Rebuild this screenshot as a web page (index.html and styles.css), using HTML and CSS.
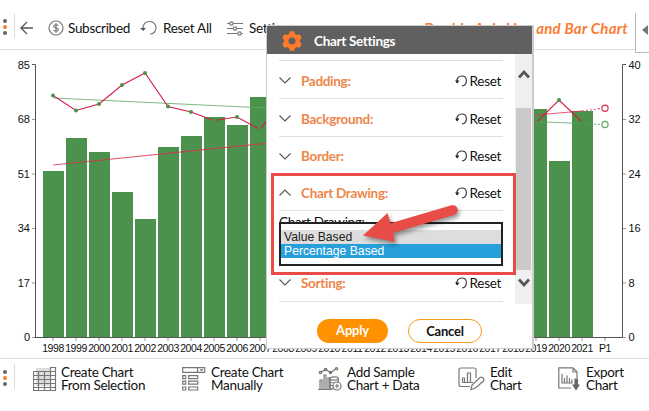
FILE: index.html
```html
<!DOCTYPE html>
<html lang="en">
<head>
<meta charset="utf-8">
<title>Chart Settings</title>
<link rel="stylesheet" href="styles.css">
</head>
<body>
<header class="toolbar">
  <div class="grip"><i></i><i class="hot"></i><i></i></div>
  <svg class="back" width="14" height="14" viewBox="0 0 14 14"><path d="M13 7H1M7 1L1 7l6 6"/></svg>
  <div class="tool subscribed"><svg width="16" height="16" viewBox="0 0 16 16"><circle cx="8" cy="8" r="7"/><path d="M10.3 5.7C9.8 4.5 6 4.2 5.8 6.2c-.1 2.2 4.6 1.1 4.5 3.5-.1 2-4 2-4.7.2M8 3v10"/></svg><span>Subscribed</span></div>
  <div class="tool reset-all"><svg width="17" height="16" viewBox="0 0 17 16"><path d="M3 9.5C2.500 4 5.500 1.500 9.500 1.500c4 0 6.500 3 6.500 6.300 0 3.700-2.700 6.200-6 6.200"/><path class="fill" d="M0 8h6L3.200 11z"/></svg><span>Reset All</span></div>
  <div class="tool settings"><svg width="17" height="15" viewBox="0 0 17 15"><path d="M0 2.500h3M6 2.500h10M0 7.500h6M10 7.500h6M0 12.500h10.500M14.500 12.500H16"/><circle cx="4.500" cy="2.500" r="1.700"/><circle cx="8" cy="7.500" r="1.700"/><circle cx="12.500" cy="12.500" r="1.700"/></svg><span>Settings</span></div>
  <h1>Double Axis Line <b>and Bar Chart</b></h1>
  <div class="side-tab"><svg width="8" height="10" viewBox="0 0 8 10"><path d="M0 5l6-5v10z"/></svg></div>
</header>

<main>
<svg class="chart" width="649" height="308" viewBox="0 50 649 308">
  <g class="bars">
    <path d="M43 171h21V337H43zM66 138h21V337H66zM89 152h21V337H89zM112 192h21V337h-21zM135 219h21V337h-21zM158 147h21V337h-21zM181 136h21V337h-21zM204 117h21V337h-21zM227 125h21V337h-21zM250 97h21V337h-21zM526 109h21V337h-21zM549 161h21V337h-21zM572 111h21V337h-21z"/>
  </g>
  <g class="axis">
    <path d="M32 64.500h3.500V337.500M35 337.500H622.500M626 64.500h-3.500V337.500"/>
    <path class="tick" d="M32 119.500h3M32 174h3M32 228.500h3M32 283h3M32 337.500h3M623 119.500h3M623 174h3M623 228.500h3M623 283h3M623 337.500h3M53 338v3M76 338v3M99 338v3M122 338v3M145 338v3M168 338v3M191 338v3M214 338v3M237 338v3M260 338v3M536 338v3M559 338v3M582 338v3M605 338v3"/>
  </g>
  <g class="labels end"><text x="30" y="69">85</text><text x="30" y="123">68</text><text x="30" y="178">51</text><text x="30" y="232">34</text><text x="30" y="287">17</text><text x="30" y="341">0</text></g>
  <g class="labels"><text x="628.500" y="69">40</text><text x="628.500" y="123">32</text><text x="628.500" y="178">24</text><text x="628.500" y="232">16</text><text x="628.500" y="287">8</text><text x="628.500" y="341">0</text></g>
  <g class="labels mid"><text x="53" y="351.500">1998</text><text x="76" y="351.500">1999</text><text x="99" y="351.500">2000</text><text x="122" y="351.500">2001</text><text x="145" y="351.500">2002</text><text x="168" y="351.500">2003</text><text x="191" y="351.500">2004</text><text x="214" y="351.500">2005</text><text x="237" y="351.500">2006</text><text x="260" y="351.500">2007</text><text x="283" y="351.500">2008</text><text x="306" y="351.500">2009</text><text x="329" y="351.500">2010</text><text x="352" y="351.500">2011</text><text x="375" y="351.500">2012</text><text x="398" y="351.500">2013</text><text x="421" y="351.500">2014</text><text x="444" y="351.500">2015</text><text x="467" y="351.500">2016</text><text x="490" y="351.500">2017</text><text x="513" y="351.500">2018</text><text x="536" y="351.500">2019</text><text x="559" y="351.500">2020</text><text x="582" y="351.500">2021</text><text x="605" y="351.500">P1</text></g>
  <g class="trend">
    <path class="green" d="M53 98L267 108M533 121.500L582 123.500"/>
    <path class="red" d="M53 165L270 143M530 115.500L582 111"/>
    <path class="green dash" d="M582 123.500L601 124.500"/>
    <path class="red dash" d="M582 111L601 108.500"/>
  </g>
  <path class="series" d="M53 95.500L76 110.500 99 104 122 85 145 73 168 106.500 191 112 214 120.500 237 117 260 129.500 270 116M530 126L536 123 559 100 582 122"/>
  <g class="points"><circle cx="53" cy="95.500" r="2"/><circle cx="76" cy="110.500" r="2"/><circle cx="99" cy="104" r="2"/><circle cx="122" cy="85" r="2"/><circle cx="145" cy="73" r="2"/><circle cx="168" cy="106.500" r="2"/><circle cx="191" cy="112" r="2"/><circle cx="214" cy="120" r="2"/><circle cx="237" cy="117" r="2"/><circle cx="260" cy="129.500" r="2"/><circle cx="536" cy="123" r="2"/><circle cx="559" cy="100" r="2"/><circle cx="582" cy="123" r="2"/></g>
  <circle class="ring red" cx="605" cy="108.300" r="3.100"/><circle class="ring green" cx="605" cy="124.500" r="3.100"/>
</svg>
</main>

<footer class="actions">
  <div class="grip"><i></i><i class="hot"></i><i></i></div>
  <div class="action selection"><svg width="24" height="24" viewBox="0 0 24 24"><path class="soft" d="M3 1h14v18H3z"/><path d="M1 4.500h22M1 8.500h22M1 12.500h22M1 16.500h22M1 20.500h22M.5 4v19.500h22V.5H17M5.500 4v19M11.500 4v19M17.500 1v22"/></svg><span>Create Chart<br>From Selection</span></div>
  <div class="action manual"><svg width="24" height="24" viewBox="0 0 24 24"><path d="M.7.700h22v4.600H.7zM15.500 1v4M.7 8.700h3v3h-3zM6.700 8.700h9v3h-9zM.7 14.200h3v3h-3zM6.700 14.200h9v3h-9zM.7 20h3v3h-3zM6.700 20h9v3h-9z"/><path class="fill" d="M17.500 2.200h4l-2 2z"/></svg><span>Create Chart<br>Manually</span></div>
  <div class="action sample"><svg width="24" height="24" viewBox="0 0 24 24"><path d="M0 22.500h14M2 22v-9h2v9M6 22V8h2v14M10 22V11h2v11M2.500 5.500l5-3 5 3 6-4"/><circle cx="2.500" cy="5.500" r="1.200"/><circle cx="7.500" cy="2.500" r="1.200"/><circle cx="12.500" cy="5.500" r="1.200"/><circle cx="18.500" cy="1.800" r="1.200"/><ellipse cx="16" cy="11.500" rx="4.300" ry="1.600"/><path d="M11.700 11.500v9c1 1.500 4 1.500 5 1.200M20.300 11.500v4M11.700 14.500c1 2 7 2 8.600 0M11.700 17.500c1 1.500 3 1.500 4 1.300"/><circle class="paper" cx="19" cy="19" r="4"/><path d="M16.800 19h4.400M19 16.800v4.400"/></svg><span>Add Sample<br>Chart + Data</span></div>
  <div class="action edit"><svg width="27" height="24" viewBox="0 0 27 24"><path d="M12 19.500H3q-2 0-2-2V3q0-2 2-2h13q2 0 2 2v8"/><path d="M4 15.500h11M4.500 15v-4h2v4M9.500 15V6h3v9"/><path class="paper" d="M13 22.500l1-4.500 8-7.500q1.500-1 3 .5t.5 3l-8 7z"/></svg><span>Edit<br>Chart</span></div>
  <div class="action export"><svg width="22" height="24" viewBox="0 0 22 24"><path d="M13 21H.8V.8H15l4 4V11M15 1v4h4"/><path d="M3.500 16h11M4 15.500V7M6.500 15.500V11M9 15.500V8.500M11.500 15.500V11M14 15.500v-3"/><path class="fill" d="M16.500 11.500h3.500v6h2L18 23.500l-4-6h2.500z"/></svg><span>Export<br>Chart</span></div>
</footer>

<section class="dialog">
  <div class="dialog-head"><svg width="20" height="20" viewBox="-10 -10 20 20"><path d="M-2.200-9.700h4.400l.7 2.700 2 1.100 2.700-.8 2.200 3.800-2 2v1.800l2 2-2.200 3.800-2.700-.8-2 1.100-.7 2.700h-4.400l-.7-2.700-2-1.100-2.700.8-2.200-3.800 2-2v-1.800l-2-2 2.200-3.800 2.700.8 2-1.100z"/><circle r="3.500"/></svg><span>Chart Settings</span></div>
  <div class="dialog-body">
    <div class="list">
      <div class="row"><svg class="chev" width="12" height="7" viewBox="0 0 12 7"><path d="M.5.500L6 6 11.500.500"/></svg><strong>Padding:</strong><svg class="undo" width="12" height="12" viewBox="0 0 12 12"><path d="M2 7.500C1 3 4 1 6.800 1c2.700 0 4.600 2 4.600 4.700 0 2.700-2 4.900-4.400 5.300"/><path class="fill" d="M0 5.500h4.500L2.200 8.500z"/></svg><span>Reset</span></div>
      <div class="row"><svg class="chev" width="12" height="7" viewBox="0 0 12 7"><path d="M.5.500L6 6 11.500.500"/></svg><strong>Background:</strong><svg class="undo" width="12" height="12" viewBox="0 0 12 12"><path d="M2 7.500C1 3 4 1 6.800 1c2.700 0 4.600 2 4.600 4.700 0 2.700-2 4.900-4.400 5.300"/><path class="fill" d="M0 5.500h4.500L2.200 8.500z"/></svg><span>Reset</span></div>
      <div class="row border-row"><svg class="chev" width="12" height="7" viewBox="0 0 12 7"><path d="M.5.500L6 6 11.500.500"/></svg><strong>Border:</strong><svg class="undo" width="12" height="12" viewBox="0 0 12 12"><path d="M2 7.500C1 3 4 1 6.800 1c2.700 0 4.600 2 4.600 4.700 0 2.700-2 4.900-4.400 5.300"/><path class="fill" d="M0 5.500h4.500L2.200 8.500z"/></svg><span>Reset</span></div>
      <div class="row drawing-row"><svg class="chev" width="12" height="7" viewBox="0 0 12 7"><path d="M.5 6.500L6 1l5.500 5.500"/></svg><strong>Chart Drawing:</strong><svg class="undo" width="12" height="12" viewBox="0 0 12 12"><path d="M2 7.500C1 3 4 1 6.800 1c2.700 0 4.600 2 4.600 4.700 0 2.700-2 4.900-4.400 5.300"/><path class="fill" d="M0 5.500h4.500L2.200 8.500z"/></svg><span>Reset</span></div>
      <div class="field"><label>Chart Drawing:</label>
        <div class="options"><div>Value Based</div><div class="active">Percentage Based</div></div>
      </div>
      <div class="row sorting-row"><svg class="chev" width="12" height="7" viewBox="0 0 12 7"><path d="M.5.500L6 6 11.500.500"/></svg><strong>Sorting:</strong><svg class="undo" width="12" height="12" viewBox="0 0 12 12"><path d="M2 7.500C1 3 4 1 6.800 1c2.700 0 4.600 2 4.600 4.700 0 2.700-2 4.900-4.400 5.300"/><path class="fill" d="M0 5.500h4.500L2.200 8.500z"/></svg><span>Reset</span></div>
    </div>
    <div class="scrollbar"><svg width="12" height="10" viewBox="0 0 12 10"><path d="M1 8.500L6 3l5 5.500"/></svg><div class="thumb"></div><svg width="12" height="10" viewBox="0 0 12 10"><path d="M1 1.500L6 7l5-5.500"/></svg></div>
  </div>
  <div class="buttons"><button class="apply">Apply</button><button class="cancel">Cancel</button></div>
</section>

<svg class="callout" width="260" height="116" viewBox="266 168 260 116"><rect x="272.500" y="174.500" width="242" height="99"/><path d="M363 235.500L387.500 213l3 10.300 61-18q4.500-.8 6 3.200 1 4.500-3.500 6.500l-61 18 2 9z"/></svg>
</body>
</html>
```
FILE: styles.css
```css
* { box-sizing: border-box; }
body {
  margin: 0; width: 649px; height: 411px; overflow: hidden; position: relative;
  display: flex; flex-direction: column; background: #fff; color: #111;
  font-family: Lato, "Noto Sans", sans-serif; font-size: 13.5px; letter-spacing: -.3px;
}
svg { display: block; flex: none; fill: none; }
span, strong, h1 { white-space: nowrap; }

.toolbar { display: flex; height: 50px; padding-top: 13px; border-bottom: 1px solid #ddd; position: relative; }
.grip { width: 15px; height: 25px; border-right: 1px solid #ddd; padding: 6px 0 0 3px; display: flex; flex-direction: column; gap: 2px; flex: none; }
.grip i { width: 4px; height: 4px; border-radius: 50%; background: #666; }
.grip .hot { background: #ff7a2a; }
.back { margin: 8px 14px 0 5px; stroke: #555; stroke-width: 1.3; }
.tool { display: flex; gap: 5px; height: 30px; align-items: center; flex: none; }
.tool svg { stroke: #777; stroke-width: 1.2; }
.tool svg .fill { fill: #555; stroke: none; }
.subscribed { width: 92px; gap: 4px; }
.reset-all { width: 87px; gap: 6px; }
.settings { width: 70px; }
.toolbar h1 { margin: 6px 0 0 auto; padding-right: 21px; font-size: 15px; line-height: 18px; letter-spacing: .25px; font-style: italic; font-weight: 700; color: #fa7c35; }
.toolbar h1 b { font-weight: 700; }
.side-tab { position: absolute; right: 0; top: 13px; width: 14px; height: 40px; border: solid #bbb; border-width: 0 0 1px 1px; background: #fff; padding: 12px 0 0 6px; }
.side-tab path { fill: #777; }

.chart .bars { fill: #4b934d; }
.axis path { stroke: #555; stroke-width: 1; }
.axis .tick { stroke: #999; }
.labels { font: 11px "Liberation Sans", sans-serif; fill: #111; letter-spacing: 0; }
.labels.end { text-anchor: end; }
.labels.mid { text-anchor: middle; font-size: 10.5px; letter-spacing: -.45px; }
.trend path { stroke-width: 1.1; opacity: .8; }
.trend .green, .ring.green { stroke: #5fa562; }
.trend .red, .ring.red { stroke: #d9304e; }
.trend .dash { stroke-dasharray: 2 2; }
.series { stroke: #d41c44; stroke-width: 1.1; }
.points { fill: #4b934d; }
.ring { fill: #fff; stroke-width: 1.2; }

.actions { display: flex; height: 53px; border-top: 1px solid #ddd; padding-top: 5px; }
.action { display: flex; gap: 4px; padding-top: 3px; line-height: 13px; flex: none; }
.action svg { stroke: #777; stroke-width: 1.2; }
.action svg .fill { fill: #666; stroke: none; }
.action svg .soft { fill: #ddd; stroke: none; }
.action svg .paper { fill: #fff; }
.action span { margin-top: -1px; }
.selection { margin-left: 18px; width: 149px; }
.manual { width: 136px; gap: 5px; }
.sample { width: 140px; gap: 5px; }
.edit { width: 100px; gap: 5px; }
.export { gap: 6px; }

.dialog { position: absolute; left: 266px; top: 25px; width: 268px; height: 324px; border: 1px solid #ccc; border-right-width: 2px; background: #fff; display: flex; flex-direction: column; }
.dialog-head { height: 28px; flex: none; background: #606060; color: #fff; display: flex; align-items: center; gap: 12px; padding: 2px 0 0 15px; font-weight: 700; }
.dialog-head path { fill: #ff7a2a; }
.dialog-head circle { fill: #606060; }
.dialog-body { display: flex; height: 250px; }
.list { width: 224px; margin: 6px 12px 0; border-top: 1px solid #e0e0e0; }
.row { height: 38px; border-bottom: 1px solid #e0e0e0; display: flex; align-items: center; padding: 2px 2px 0 0; }
.chev { stroke: #555; stroke-width: 1.1; }
.row strong { margin: 0 auto 0 10px; color: #ee8549; }
.undo { stroke: #333; stroke-width: 1.1; margin-right: 3px; }
.undo .fill { fill: #222; stroke: none; }
.border-row { height: 37px; }
.drawing-row { height: 37px; padding-top: 1px; }
.field { height: 55px; padding-top: 4px; line-height: 15px; }
.field label { display: block; height: 7px; overflow: hidden; }
.options { height: 44px; border: 2px solid #222; padding-top: 6px; background: #fff; font: 12.2px/14px "Liberation Sans", sans-serif; letter-spacing: 0; color: #222; }
.options div { padding-left: 3px; background: #ddd; }
.options .active { background: #269fdb; color: #fff; }
.sorting-row { height: 36px; padding: 0 2px 2px 0; }
.scrollbar { width: 17px; background: #efefef; display: flex; flex-direction: column; align-items: center; }
.scrollbar svg { margin: 15px 0; stroke: #555; stroke-width: 2.8; }
.scrollbar svg:last-child { margin: 8px 0; }
.thumb { width: 15px; height: 162px; margin-top: 14px; flex: none; background: #cacaca; }
.buttons { display: flex; gap: 20px; padding: 15px 0 0 50px; }
.buttons button { height: 24px; border-radius: 12px; padding: 0; font: 700 13px Lato, sans-serif; letter-spacing: -.2px; }
.apply { width: 71px; border: 0; color: #fff; background: #ff9100; }
.buttons .apply { padding-bottom: 3px; }
.cancel { width: 74px; border: 1px solid #f99a1c; background: #fff; color: #111; }
.callout { position: absolute; left: 266px; top: 168px; }
.callout rect { stroke: #e84c46; stroke-width: 3; }
.callout path { fill: #e84c46; filter: drop-shadow(2px 3px 2px rgba(0, 0, 0, .4)); }
```
